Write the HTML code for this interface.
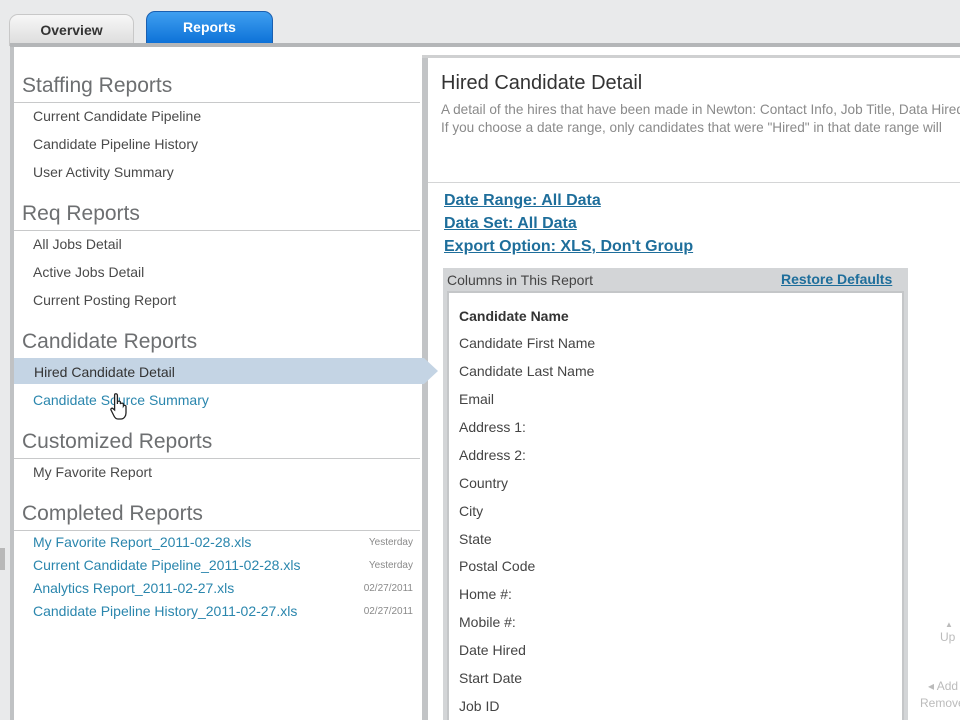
<!DOCTYPE html>
<html><head><meta charset="utf-8"><style>
*{margin:0;padding:0;box-sizing:border-box}
html,body{width:960px;height:720px;overflow:hidden}
body{background:#e9eaeb;font-family:"Liberation Sans",sans-serif;position:relative}
.a{position:absolute;white-space:nowrap}
.tab{position:absolute;border-radius:9px 9px 0 0;text-align:center;font-weight:bold;font-size:14px}
.h{font-size:21px;color:#6d6f71}
.hr{position:absolute;height:1px;background:#c8c9ca}
.it{font-size:14px;color:#4a4a4a}
.lk{font-size:14px;color:#2a86ad}
.dt{font-size:10px;color:#8a8a8a}
.col{font-size:14px;color:#444;left:459px}
.bl{font-size:16px;font-weight:bold;color:#1e6e9b;text-decoration:underline;left:444px}
</style></head><body>
<div class="tab" style="left:9px;top:14px;width:125px;height:32px;background:linear-gradient(#f7f7f7,#dcdcdc);border:1px solid #c8c8c8;color:#333;line-height:30px">Overview</div>
<div class="tab" style="left:146px;top:11px;width:127px;height:35px;background:linear-gradient(#3f9ff0,#0a6fd6);border:1px solid #1a5fb0;color:#fff;line-height:30px">Reports</div>
<div class="a" style="left:10px;top:43px;width:950px;height:4px;background:#b4b6b8"></div>
<div class="a" style="left:10px;top:47px;width:950px;height:673px;background:#fff"></div>
<div class="a" style="left:10px;top:47px;width:4px;height:673px;background:#c0c2c4"></div>
<div class="a" style="left:422px;top:55px;width:6px;height:665px;background:#c2c4c6"></div>
<div class="a" style="left:422px;top:55px;width:538px;height:3px;background:#cfd0d1"></div>
<div class="hr" style="left:428px;top:182px;width:532px;background:#d4d5d6"></div>
<div class="a" style="left:0;top:548px;width:5px;height:22px;background:#b8b8b8"></div>

<div class="a h" style="left:22px;top:74px">Staffing Reports</div>
<div class="hr" style="left:14px;top:102px;width:406px"></div>
<div class="a it" style="left:33px;top:108px">Current Candidate Pipeline</div>
<div class="a it" style="left:33px;top:136px">Candidate Pipeline History</div>
<div class="a it" style="left:33px;top:164px">User Activity Summary</div>
<div class="a h" style="left:22px;top:202px">Req Reports</div>
<div class="hr" style="left:14px;top:230px;width:406px"></div>
<div class="a it" style="left:33px;top:236px">All Jobs Detail</div>
<div class="a it" style="left:33px;top:264px">Active Jobs Detail</div>
<div class="a it" style="left:33px;top:292px">Current Posting Report</div>
<div class="a h" style="left:22px;top:330px">Candidate Reports</div>
<svg class="a" style="left:14px;top:358px" width="424" height="26"><polygon points="0,0 410,0 424,13 410,26 0,26" fill="#c4d4e4"/></svg>
<div class="a it" style="left:34px;top:364px;color:#333">Hired Candidate Detail</div>
<div class="a lk" style="left:33px;top:392px">Candidate Source Summary</div>
<svg class="a" style="left:109px;top:392px" width="24" height="30" viewBox="0 0 24 30"><path d="M6 2c1.2-.6 2.4 0 2.4 1.4V12l0-2c.6-1.2 2.6-1.2 3 0v2c.6-1.2 2.6-1.2 3 0v2c.6-1 2.6-.8 2.6.6V21c0 3-2 6-5 6H9c-2 0-3-1-4-3l-3-6c-.6-1.2.8-2.4 2-1.4L5.6 18V3.4C5.6 2.8 5.6 2.2 6 2z" fill="#fff" stroke="#222" stroke-width="1.3"/></svg>
<div class="a h" style="left:22px;top:430px">Customized Reports</div>
<div class="hr" style="left:14px;top:458px;width:406px"></div>
<div class="a it" style="left:33px;top:464px">My Favorite Report</div>
<div class="a h" style="left:22px;top:502px">Completed Reports</div>
<div class="hr" style="left:14px;top:530px;width:406px"></div>
<div class="a lk" style="left:33px;top:534px">My Favorite Report_2011-02-28.xls</div>
<div class="a lk" style="left:33px;top:557px">Current Candidate Pipeline_2011-02-28.xls</div>
<div class="a lk" style="left:33px;top:580px">Analytics Report_2011-02-27.xls</div>
<div class="a lk" style="left:33px;top:603px">Candidate Pipeline History_2011-02-27.xls</div>
<div class="a dt" style="right:547px;top:537px">Yesterday</div>
<div class="a dt" style="right:547px;top:560px">Yesterday</div>
<div class="a dt" style="right:547px;top:583px">02/27/2011</div>
<div class="a dt" style="right:547px;top:606px">02/27/2011</div>

<div class="a" style="left:441px;top:72px;font-size:20px;color:#333">Hired Candidate Detail</div>
<div class="a" style="left:441px;top:102px;font-size:13.6px;color:#8a8a8a">A detail of the hires that have been made in Newton: Contact Info, Job Title, Data Hired</div>
<div class="a" style="left:441px;top:120px;font-size:13.6px;color:#8a8a8a">If you choose a date range, only candidates that were "Hired" in that date range will</div>
<div class="a bl" style="top:192px">Date Range: All Data</div>
<div class="a bl" style="top:215px">Data Set: All Data</div>
<div class="a bl" style="top:238px">Export Option: XLS, Don't Group</div>
<div class="a" style="left:443px;top:268px;width:465px;height:452px;background:#d3d5d7"></div>
<div class="a" style="left:447px;top:291px;width:457px;height:429px;background:#fff;border:2px solid #c4c6c8;border-bottom:none"></div>
<div class="a" style="left:447px;top:272px;font-size:14px;color:#444">Columns in This Report</div>
<div class="a" style="left:781px;top:271px;font-size:14px;font-weight:bold;color:#1e6e9b;text-decoration:underline">Restore Defaults</div>
<div class="a col" style="top:308px;font-weight:bold;color:#333">Candidate Name</div>
<div class="a col" style="top:335px">Candidate First Name</div>
<div class="a col" style="top:363px">Candidate Last Name</div>
<div class="a col" style="top:391px">Email</div>
<div class="a col" style="top:419px">Address 1:</div>
<div class="a col" style="top:447px">Address 2:</div>
<div class="a col" style="top:475px">Country</div>
<div class="a col" style="top:503px">City</div>
<div class="a col" style="top:531px">State</div>
<div class="a col" style="top:558px">Postal Code</div>
<div class="a col" style="top:586px">Home #:</div>
<div class="a col" style="top:614px">Mobile #:</div>
<div class="a col" style="top:642px">Date Hired</div>
<div class="a col" style="top:670px">Start Date</div>
<div class="a col" style="top:698px">Job ID</div>
<div class="a" style="left:945px;top:620px;font-size:8px;color:#bbb">▲</div>
<div class="a" style="left:940px;top:630px;font-size:12px;color:#bbb">Up</div>
<div class="a" style="left:928px;top:679px;font-size:12px;color:#bbb">◂ Add</div>
<div class="a" style="left:920px;top:696px;font-size:12px;color:#bbb">Remove</div>
</body></html>
